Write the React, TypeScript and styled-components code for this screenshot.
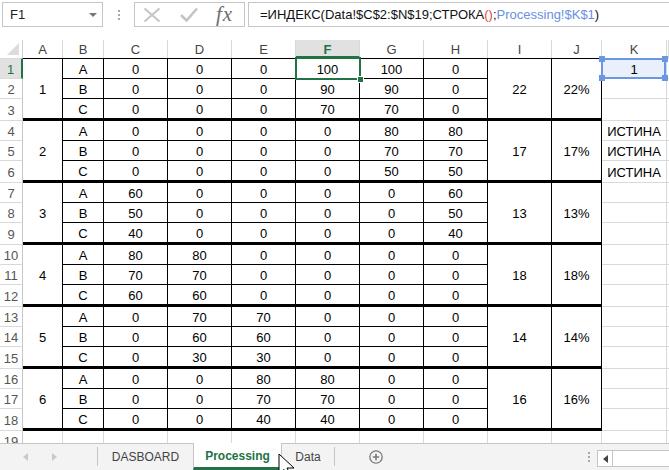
import React from 'react';
import styled, { createGlobalStyle } from 'styled-components';

const GlobalStyle = createGlobalStyle`
  html, body { margin: 0; padding: 0; background: #fff; }
  body { font-family: "Liberation Sans", Arial, sans-serif; }
`;

type Edge = 'none' | 'grid' | 'thin' | 'thick';

const edge = (e: Edge) =>
  e === 'thick' ? '3px solid #000' : e === 'thin' ? '1px solid #000' : e === 'grid' ? '1px solid #d9d9d9' : 'none';

const groups = [
  { n: 1, sum: 22, rows: [[0, 0, 0, 100, 100, 0], [0, 0, 0, 90, 90, 0], [0, 0, 0, 70, 70, 0]] },
  { n: 2, sum: 17, rows: [[0, 0, 0, 0, 80, 80], [0, 0, 0, 0, 70, 70], [0, 0, 0, 0, 50, 50]] },
  { n: 3, sum: 13, rows: [[60, 0, 0, 0, 0, 60], [50, 0, 0, 0, 0, 50], [40, 0, 0, 0, 0, 40]] },
  { n: 4, sum: 18, rows: [[80, 80, 0, 0, 0, 0], [70, 70, 0, 0, 0, 0], [60, 60, 0, 0, 0, 0]] },
  { n: 5, sum: 14, rows: [[0, 70, 70, 0, 0, 0], [0, 60, 60, 0, 0, 0], [0, 30, 30, 0, 0, 0]] },
  { n: 6, sum: 16, rows: [[0, 0, 80, 80, 0, 0], [0, 0, 70, 70, 0, 0], [0, 0, 40, 40, 0, 0]] },
];

const kValues: Record<number, string> = { 1: '1', 4: 'ИСТИНА', 5: 'ИСТИНА', 6: 'ИСТИНА' };
const columns = ['A', 'B', 'C', 'D', 'E', 'F', 'G', 'H', 'I', 'J', 'K'];

const Page = styled.div`
  position: relative;
  width: 669px;
  height: 470px;
  overflow: hidden;
  background: #fff;
  display: flex;
  flex-direction: column;
  font-family: "Liberation Sans", Arial, sans-serif;
`;

/* formula bar */

const TopBar = styled.div`
  flex: none;
  height: 40px;
  box-sizing: border-box;
  padding: 2px 0 0 2px;
  display: flex;
  align-items: flex-start;
`;

const NameBox = styled.div`
  box-sizing: border-box;
  width: 101px;
  height: 25px;
  border: 1px solid #c6c6c6;
  display: flex;
  align-items: center;
  justify-content: space-between;
  padding: 0 5px 0 7px;
  font-size: 13px;
  color: #222;
`;

const Grip = styled.div`
  width: 31px;
  height: 25px;
  display: flex;
  flex-direction: column;
  align-items: center;
  justify-content: center;
  gap: 2px;

  span {
    width: 2px;
    height: 2px;
    background: #a8a8a8;
  }
`;

const FxBox = styled.div`
  box-sizing: border-box;
  width: 111px;
  height: 25px;
  border: 1px solid #c6c6c6;
  display: flex;
  align-items: center;
  padding-left: 8px;
  gap: 19px;
`;

const FxLabel = styled.span`
  font-family: "Liberation Serif", "Times New Roman", serif;
  font-style: italic;
  font-size: 21px;
  color: #6d6d6d;
  letter-spacing: 1px;
  margin-left: -1px;
  line-height: 1;
`;

const FormulaBox = styled.div`
  box-sizing: border-box;
  flex: 1;
  height: 25px;
  margin-left: 3px;
  border: 1px solid #c6c6c6;
  border-right: none;
  display: flex;
  align-items: center;
  padding-left: 11px;
  font-size: 13px;
  color: #111;
  white-space: nowrap;
`;

const Token = styled.span<{ $tone?: 'red' | 'blue' }>`
  color: ${p => (p.$tone === 'red' ? '#e5483b' : p.$tone === 'blue' ? '#6890e2' : 'inherit')};
`;

/* sheet grid */

const Sheet = styled.div`
  flex: 1;
  min-height: 0;
  overflow: hidden;
  display: grid;
  grid-template-columns: 23px 40px 41px repeat(7, 64px) 50px 65px 1fr;
  grid-template-rows: 18px 21px 20px 22px repeat(5, 20px 20px 22px) 20px;
  align-content: start;
`;

const Corner = styled.div`
  box-sizing: border-box;
  border-right: 1px solid #d0d0d0;
  display: flex;
  align-items: flex-end;
  justify-content: flex-end;
  padding: 0 3px 3px 0;
`;

const CornerMark = styled.div`
  width: 12px;
  height: 12px;
  background: #dcdcdc;
  clip-path: polygon(100% 0, 100% 100%, 0 100%);
`;

const ColHead = styled.div<{ $active?: boolean }>`
  box-sizing: border-box;
  display: flex;
  align-items: center;
  justify-content: center;
  font-size: 13px;
  border-right: 1px solid #d9d9d9;
  background: ${p => (p.$active ? '#e1e1e1' : '#fff')};
  color: ${p => (p.$active ? '#217346' : '#444')};
  font-weight: ${p => (p.$active ? 700 : 400)};
  border-bottom: ${p => (p.$active ? '2px solid #217346' : 'none')};
  padding-top: ${p => (p.$active ? '2px' : '0')};
`;

const RowHead = styled.div<{ $active?: boolean; $first?: boolean }>`
  box-sizing: border-box;
  display: flex;
  align-items: center;
  justify-content: center;
  font-size: 13px;
  padding-top: 1px;
  border-top: ${p => (p.$first ? '1px solid #d9d9d9' : 'none')};
  border-bottom: 1px solid #d9d9d9;
  border-right: ${p => (p.$active ? '2px solid #217346' : '1px solid #c6c6c6')};
  background: ${p => (p.$active ? '#e1e1e1' : '#fff')};
  color: ${p => (p.$active ? '#217346' : '#555')};
`;

const Cell = styled.div<{ $span?: number; $top?: Edge; $bottom?: Edge; $right?: Edge; $fill?: string }>`
  position: relative;
  box-sizing: border-box;
  grid-row: span ${p => p.$span ?? 1};
  display: flex;
  align-items: center;
  justify-content: center;
  padding-top: 1px;
  font-size: 13px;
  color: #000;
  white-space: nowrap;
  background: ${p => p.$fill ?? 'transparent'};
  border-top: ${p => edge(p.$top ?? 'none')};
  border-bottom: ${p => edge(p.$bottom ?? 'grid')};
  border-right: ${p => edge(p.$right ?? 'grid')};
`;

const ActiveFrame = styled.div`
  position: absolute;
  top: -2px;
  left: -1px;
  right: -2px;
  bottom: -2px;
  border: 2px solid #217346;
  z-index: 2;
  pointer-events: none;
`;

const FillHandle = styled.div`
  position: absolute;
  right: -5px;
  bottom: -5px;
  width: 5px;
  height: 5px;
  background: #217346;
  border: 1px solid #fff;
`;

const RefFrame = styled.div`
  position: absolute;
  top: -1px;
  left: -1px;
  right: 0;
  bottom: -1px;
  border: 2px solid #6a96e4;
  z-index: 2;
  pointer-events: none;
`;

const RefHandle = styled.div<{ $v: 'top' | 'bottom'; $h: 'left' | 'right' }>`
  position: absolute;
  ${p => p.$v}: -4px;
  ${p => p.$h}: -4px;
  width: 6px;
  height: 6px;
  background: #6a96e4;
`;

/* sheet tabs */

const TabBar = styled.div`
  position: relative;
  flex: none;
  height: 27px;
  box-sizing: border-box;
  border-top: 1px solid #c6c6c6;
  background: #f3f3f3;
  display: flex;
  align-items: stretch;
`;

const NavArrows = styled.div`
  width: 97px;
  display: flex;
  align-items: center;
  padding-left: 23px;
  gap: 24px;
  box-sizing: border-box;
`;

const Divider = styled.div`
  width: 1px;
  background: #c6c6c6;
  margin: 3px 0 4px;
`;

const Tab = styled.div<{ $active?: boolean; $w: number }>`
  box-sizing: border-box;
  width: ${p => p.$w}px;
  display: flex;
  align-items: center;
  justify-content: center;
  font-size: 12px;
  padding-top: ${p => (p.$active ? '1px' : '0')};
  margin-top: ${p => (p.$active ? '-1px' : '0')};
  color: ${p => (p.$active ? '#217346' : '#444')};
  font-weight: ${p => (p.$active ? 700 : 400)};
  background: ${p => (p.$active ? '#fff' : 'transparent')};
  border-bottom: ${p => (p.$active ? '3px solid #217346' : 'none')};
  border-left: ${p => (p.$active ? '1px solid #c6c6c6' : 'none')};
  border-right: ${p => (p.$active ? '1px solid #c6c6c6' : 'none')};
`;

const AddSheet = styled.div`
  width: 14px;
  margin-left: 34px;
  display: flex;
  align-items: center;
`;

const TabGrip = styled(Grip)`
  width: 16px;
  height: auto;
  margin-left: auto;
`;

const HScroll = styled.div`
  box-sizing: border-box;
  width: 72px;
  height: 17px;
  margin: 6px 0 0 0;
  border: 1px solid #c6c6c6;
  border-right: none;
  background: #fff;
  display: flex;
`;

const ScrollButton = styled.div`
  width: 14px;
  border-right: 1px solid #c6c6c6;
  display: flex;
  align-items: center;
  justify-content: center;
`;

const Pointer = styled.svg`
  position: absolute;
  left: 278px;
  top: 9px;
`;

const Triangle = ({ dir, color }: { dir: 'left' | 'right'; color: string }) => (
  <svg width="5" height="8" viewBox="0 0 5 8">
    <polygon points={dir === 'left' ? '5,0 5,8 0,4' : '0,0 0,8 5,4'} fill={color} />
  </svg>
);

const App = () => {
  const cells: React.ReactNode[] = [];

  cells.push(
    <Corner key="corner">
      <CornerMark />
    </Corner>
  );
  columns.forEach(c => cells.push(<ColHead key={`h${c}`} $active={c === 'F'}>{c}</ColHead>));
  cells.push(<ColHead key="hL" />);

  groups.forEach((g, gi) => {
    g.rows.forEach((vals, ri) => {
      const r = gi * 3 + ri + 1;
      const first = r === 1;
      const top: Edge = first ? 'thin' : 'none';
      const bottom: Edge = ri === 2 ? 'thick' : 'thin';

      cells.push(<RowHead key={`r${r}`} $active={first} $first={first}>{r}</RowHead>);
      if (ri === 0) {
        cells.push(<Cell key={`a${r}`} $span={3} $top={top} $bottom="thick" $right="thin">{g.n}</Cell>);
      }
      cells.push(<Cell key={`b${r}`} $top={top} $bottom={bottom} $right="thin">{'ABC'[ri]}</Cell>);
      vals.forEach((v, ci) => (
        cells.push(
          <Cell key={`v${r}-${ci}`} $top={top} $bottom={bottom} $right="thin">
            {v}
            {first && ci === 3 && (
              <ActiveFrame>
                <FillHandle />
              </ActiveFrame>
            )}
          </Cell>
        )
      ));
      if (ri === 0) {
        cells.push(<Cell key={`i${r}`} $span={3} $top={top} $bottom="thick" $right="thin">{g.sum}</Cell>);
        cells.push(<Cell key={`j${r}`} $span={3} $top={top} $bottom="thick" $right="thin">{g.sum}%</Cell>);
      }
      cells.push(
        <Cell key={`k${r}`} $top={first ? 'grid' : 'none'} $fill={first ? '#e9effb' : undefined}>
          {kValues[r]}
          {first && (
            <RefFrame>
              <RefHandle $v="top" $h="left" />
              <RefHandle $v="top" $h="right" />
              <RefHandle $v="bottom" $h="left" />
              <RefHandle $v="bottom" $h="right" />
            </RefFrame>
          )}
        </Cell>
      );
      cells.push(<Cell key={`l${r}`} $top={first ? 'grid' : 'none'} $right="none" />);
    });
  });

  cells.push(<RowHead key="r19">19</RowHead>);
  columns.forEach(c => cells.push(<Cell key={`e${c}`} />));
  cells.push(<Cell key="eL" $right="none" />);

  return (
    <>
      <GlobalStyle />
      <Page>
        <TopBar>
          <NameBox>
            F1
            <svg width="8" height="4" viewBox="0 0 8 4">
              <polygon points="0,0 8,0 4,4" fill="#777" />
            </svg>
          </NameBox>
          <Grip>
            <span />
            <span />
            <span />
          </Grip>
          <FxBox>
            <svg width="18" height="16" viewBox="0 0 18 16">
              <path d="M1.5 1.5 L16.5 14.5 M16.5 1.5 L1.5 14.5" stroke="#c4c4c4" strokeWidth="2" fill="none" />
            </svg>
            <svg width="18" height="15" viewBox="0 0 18 15">
              <path d="M1 8 L6.5 13.5 L17 1.5" stroke="#c4c4c4" strokeWidth="2.6" fill="none" />
            </svg>
            <FxLabel>fx</FxLabel>
          </FxBox>
          <FormulaBox>
            =ИНДЕКС(Data!$C$2:$N$19;СТРОКА<Token $tone="red">()</Token>;<Token $tone="blue">Processing!$K$1</Token>)
          </FormulaBox>
        </TopBar>

        <Sheet>{cells}</Sheet>

        <TabBar>
          <NavArrows>
            <Triangle dir="left" color="#c9c9c9" />
            <Triangle dir="right" color="#c9c9c9" />
          </NavArrows>
          <Divider />
          <Tab $w={95}>DASBOARD</Tab>
          <Tab $w={89} $active>Processing</Tab>
          <Tab $w={52}>Data</Tab>
          <Divider />
          <AddSheet>
            <svg width="14" height="14" viewBox="0 0 14 14">
              <circle cx="7" cy="7" r="6.2" stroke="#7a7a7a" strokeWidth="1.3" fill="none" />
              <path d="M7 3.8 V10.2 M3.8 7 H10.2" stroke="#7a7a7a" strokeWidth="1.6" />
            </svg>
          </AddSheet>
          <TabGrip>
            <span />
            <span />
            <span />
          </TabGrip>
          <HScroll>
            <ScrollButton>
              <Triangle dir="left" color="#444" />
            </ScrollButton>
          </HScroll>
          <Pointer width="20" height="24" viewBox="0 0 20 24">
            <path d="M1 1 L1 21 L6 16.5 L9.5 23.5 L12.5 22 L9 15 L16 15 Z" fill="#fff" stroke="#000" strokeWidth="1" />
          </Pointer>
        </TabBar>
      </Page>
    </>
  );
};

export default App;
